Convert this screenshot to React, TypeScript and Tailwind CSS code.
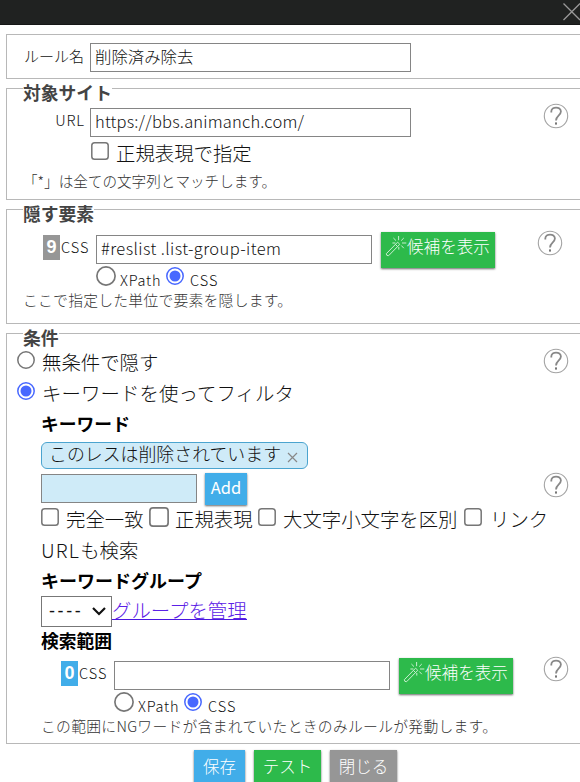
import React from 'react';

const HelpIcon: React.FC = () => (
  <svg className="h-[26px] w-[26px] shrink-0" viewBox="0 0 26 26" fill="none">
    <circle cx="13" cy="13" r="11.7" stroke="#a3a3a3" strokeWidth="1.1" />
    <path d="M8.3 9.4V8.6C8.3 3.2 17.9 3.2 17.9 8.6C17.9 12.2 13 12.6 13 17.6" stroke="#888" strokeWidth="1.8" />
    <rect x="12" y="19.4" width="2" height="2.2" fill="#777" />
  </svg>
);

const WandIcon: React.FC = () => (
  <svg className="h-[22px] w-[22px] shrink-0" viewBox="0 0 22 22" fill="none" stroke="#c9eed0" strokeWidth="1">
    <path d="M1.3 18.7L12.6 7.2L14.8 9.3L3.6 20.7Q1.3 21 1.3 18.7Z" />
    <path d="M10.4 9.4L12.6 11.6" />
    <path d="M13.6 1V5.2M8.4 3L11 5.6M18.8 3L16.2 5.6M17 8H21.3M7.4 8H10.4M16.3 10.5L18.8 13.2M13.8 12V14.6" />
  </svg>
);

const Checkbox: React.FC<{ className: string }> = ({ className }) => (
  <svg role="checkbox" aria-checked="false" className={`shrink-0 ${className}`} viewBox="0 0 18 18" fill="white">
    <rect x="0.8" y="0.8" width="16.4" height="16.4" rx="2.8" stroke="#767676" strokeWidth="1.5" />
  </svg>
);

const Radio: React.FC<{ className: string; checked?: boolean }> = ({ className, checked = false }) => (
  <svg role="radio" aria-checked={checked} className={`shrink-0 ${className}`} viewBox="0 0 18 18" fill="white">
    <circle cx="9" cy="9" r="8.2" stroke={checked ? '#4868ff' : '#767676'} strokeWidth="1.5" />
    {checked && <circle cx="9" cy="9" r="5.5" fill="#4868ff" />}
  </svg>
);

type SectionProps = {
  title: string;
  className: string;
  children: React.ReactNode;
};

const Section: React.FC<SectionProps> = ({ title, className, children }) => (
  <section className={`relative ml-[6px] border border-r-0 border-[#b8b8b8] ${className}`}>
    <h2 className="absolute -top-[9px] left-[16px] bg-white text-[17.8px] leading-[24px] font-bold text-[#444]">
      {title}
    </h2>
    {children}
  </section>
);

const CandidateButton: React.FC = () => (
  <button className="ml-[9px] flex h-[36px] w-[114px] shrink-0 items-start bg-[#2dba4b] pt-[3px] pl-[4px] text-[16.6px] leading-[22px] text-white shadow-[0_1px_2px_rgba(0,0,0,0.6)]">
    <WandIcon />
    <span className="whitespace-nowrap">候補を表示</span>
  </button>
);

type SelectorProps = {
  count: number;
  badge: string;
  value: string;
  help: string;
};

const SelectorField: React.FC<SelectorProps> = ({ count, badge, value, help }) => (
  <div>
    <div className="flex h-[36px] items-start">
      <span className={`mt-[3px] h-[25px] w-[17px] text-center text-[18px] leading-[25px] font-bold text-white font-['Liberation_Sans',sans-serif] ${badge}`}>
        {count}
      </span>
      <span className="mt-[3px] w-[36px] pl-px text-[14.5px] leading-[23px] tracking-[1px]">CSS</span>
      <input
        className="mt-[3px] h-[29px] w-[276px] border border-[#858585] px-[4px] pb-[4px] text-[16.5px] tracking-[0.4px]"
        defaultValue={value}
      />
      <CandidateButton />
      <span className={help}>
        <HelpIcon />
      </span>
    </div>
    <div className="flex h-[24px] pl-[53px] text-[14.5px] leading-[20px]">
      <Radio className="mt-[-2px] h-[20px] w-[20px]" />
      <span className="w-[50px] pt-[2px] pl-[4px] tracking-[0.8px]">XPath</span>
      <Radio checked className="mt-[-1px] h-[18px] w-[18px]" />
      <span className="pt-[2px] pl-[6px] tracking-[1px]">CSS</span>
    </div>
  </div>
);

const keywordOptions = [
  { label: '完全一致', box: 'mt-[8px] h-[18px] w-[18px]', text: 'w-[90px] pl-[7px]' },
  { label: '正規表現', box: 'mt-[7px] h-[20px] w-[20px]', text: 'w-[89px] pl-[6px]' },
  { label: '大文字小文字を区別', box: 'mt-[8px] h-[18px] w-[18px]', text: 'w-[188px] pl-[7px]' },
  { label: 'リンク', box: 'mt-[8px] h-[18px] w-[18px]', text: 'pl-[8px]' },
];

const App: React.FC = () => {
  return (
    <div className="h-[782px] w-[580px] overflow-hidden bg-white font-['Noto_Sans_CJK_JP',sans-serif] font-light text-[#111]">
      {/* Title bar */}
      <header className="flex h-[25px] justify-end border-b border-[#151616] bg-[#202221]">
        <svg className="mt-[2px] h-[19px] w-[18px]" viewBox="0 0 18 19" fill="none" stroke="#999" strokeWidth="1.3">
          <path d="M1.5 1.5L18 18M1.5 18L18 1.5" />
        </svg>
      </header>

      {/* Rule name */}
      <section className="mt-[9px] ml-[6px] flex h-[45px] border border-r-0 border-[#b8b8b8] pt-[8px]">
        <span className="w-[83px] pr-[6px] text-right text-[15px] leading-[26px] whitespace-nowrap">ルール名</span>
        <input
          className="h-[29px] w-[321px] border border-[#858585] px-[4px] pb-[3px] text-[16.4px]"
          defaultValue="削除済み除去"
        />
      </section>

      {/* Target site */}
      <Section title="対象サイト" className="mt-[9px] h-[112px] pt-[14px]">
        <div className="flex h-[36px] items-start">
          <span className="mt-[5px] w-[83px] pr-[5px] text-right text-[14.8px] leading-[24px] tracking-[0.9px]">URL</span>
          <input
            className="mt-[5px] h-[29px] w-[321px] border border-[#858585] px-[4px] pb-[4px] text-[16.5px] tracking-[0.18px]"
            defaultValue="https://bbs.animanch.com/"
          />
          <span className="ml-[132px]">
            <HelpIcon />
          </span>
        </div>
        <label className="flex h-[28px] pl-[84px] text-[19.4px] leading-[28px]">
          <Checkbox className="mt-[3px] mr-[7px] h-[18px] w-[18px]" />
          正規表現で指定
        </label>
        <p className="pl-[16px] text-[14.6px] leading-[27px] whitespace-nowrap text-[#333]">「*」は全ての文字列とマッチします。</p>
      </Section>

      {/* Hidden element */}
      <Section title="隠す要素" className="mt-[9px] h-[115px] pt-[22px]">
        <div className="pl-[36px]">
          <SelectorField count={9} badge="bg-[#969696]" value="#reslist .list-group-item" help="-mt-[2px] ml-[42px]" />
        </div>
        <p className="-mt-px pl-[16px] text-[14.8px] leading-[18px] tracking-[0.25px] whitespace-nowrap text-[#333]">
          ここで指定した単位で要素を隠します。
        </p>
      </Section>

      {/* Conditions */}
      <Section title="条件" className="mt-[9px] h-[411px] pt-[13px]">
        <div className="flex h-[31px] pl-[10px] text-[19.4px] leading-[29px]">
          <Radio className="mt-[4px] mr-[7px] h-[18px] w-[18px]" />
          <span className="w-[501px]">無条件で隠す</span>
          <span className="mt-px">
            <HelpIcon />
          </span>
        </div>
        <div className="flex h-[32px] pl-[10px] text-[19.4px] leading-[29px] tracking-[0.1px]">
          <Radio checked className="mt-[4px] mr-[7px] h-[18px] w-[18px]" />
          キーワードを使ってフィルタ
        </div>
        <div className="pl-[34px]">
          <h3 className="h-[32px] text-[17.8px] leading-[26px] font-bold text-black">キーワード</h3>
          <div className="flex h-[27px] w-[267px] items-center rounded-[6px] border border-[#4ba4cf] bg-[#cfebf8] pl-[7px] text-[17.9px] whitespace-nowrap">
            <span className="-mt-[5px]">このレスは削除されています</span>
            <svg className="mt-[3px] ml-[6px] h-[11px] w-[11px] shrink-0" viewBox="0 0 11 11" stroke="#888" strokeWidth="1.2">
              <path d="M1 1L10 10M10 1L1 10" />
            </svg>
          </div>
          <div className="flex h-[36px] items-start pt-[4px]">
            <input className="mt-px h-[29px] w-[156px] border border-[#858585] bg-[#cfebf8]" />
            <button className="ml-[8px] h-[32px] w-[42px] bg-[#41ade9] pb-[3px] text-[16.5px] font-normal text-white shadow-[0_1px_2px_rgba(0,0,0,0.6)]">
              Add
            </button>
            <span className="-mt-px ml-[296px]">
              <HelpIcon />
            </span>
          </div>
          <div className="-mt-[5px] flex h-[32px] text-[19.4px] leading-[37px] whitespace-nowrap">
            {keywordOptions.map((option) => (
              <label key={option.label} className="flex">
                <Checkbox className={option.box} />
                <span className={option.text}>{option.label}</span>
              </label>
            ))}
          </div>
          <p className="mt-[4px] h-[31px] text-[19.4px] leading-[27px]">
            <span className="tracking-[1.2px]">URL</span>も検索
          </p>
          <h3 className="h-[30px] text-[18px] leading-[26px] font-bold text-black">キーワードグループ</h3>
          <div className="-mt-px flex h-[31px]">
            <button className="flex h-[31px] w-[71px] items-center justify-between border border-[#777] pr-[5px] pl-[7px] text-[18px]">
              <span className="font-['Liberation_Sans',sans-serif] tracking-[2.6px]">----</span>
              <svg className="h-[9px] w-[14px] shrink-0" viewBox="0 0 14 9" fill="none" stroke="#111" strokeWidth="2.2">
                <path d="M1 1L7 7L13 1" />
              </svg>
            </button>
            <a
              href="#"
              className="h-[24px] border-b border-[#4b17e0] text-[19.4px] leading-[28px] whitespace-nowrap text-[#5b21e6]"
            >
              グループを管理
            </a>
          </div>
          <h3 className="h-[31px] text-[17.8px] leading-[27px] font-bold text-black">検索範囲</h3>
          <div className="pl-[20px]">
            <SelectorField count={0} badge="bg-[#41ade9]" value="" help="-mt-[2px] ml-[30px]" />
          </div>
          <p className="-mt-px text-[14.8px] leading-[18px] tracking-[0.28px] whitespace-nowrap text-[#333]">
            この範囲にNGワードが含まれていたときのみルールが発動します。
          </p>
        </div>
      </Section>

      {/* Actions */}
      <footer className="mt-[6px] flex gap-[9px] pl-[194px] text-[16.5px] text-white">
        <button className="h-[34px] w-[51px] bg-[#41ade9] pb-[2px] shadow-[0_1px_2px_rgba(0,0,0,0.6)]">保存</button>
        <button className="h-[34px] w-[67px] bg-[#2dba4b] pb-[2px] shadow-[0_1px_2px_rgba(0,0,0,0.6)]">テスト</button>
        <button className="h-[34px] w-[67px] bg-[#969696] pb-[2px] shadow-[0_1px_2px_rgba(0,0,0,0.6)]">閉じる</button>
      </footer>
    </div>
  );
};

export default App;
